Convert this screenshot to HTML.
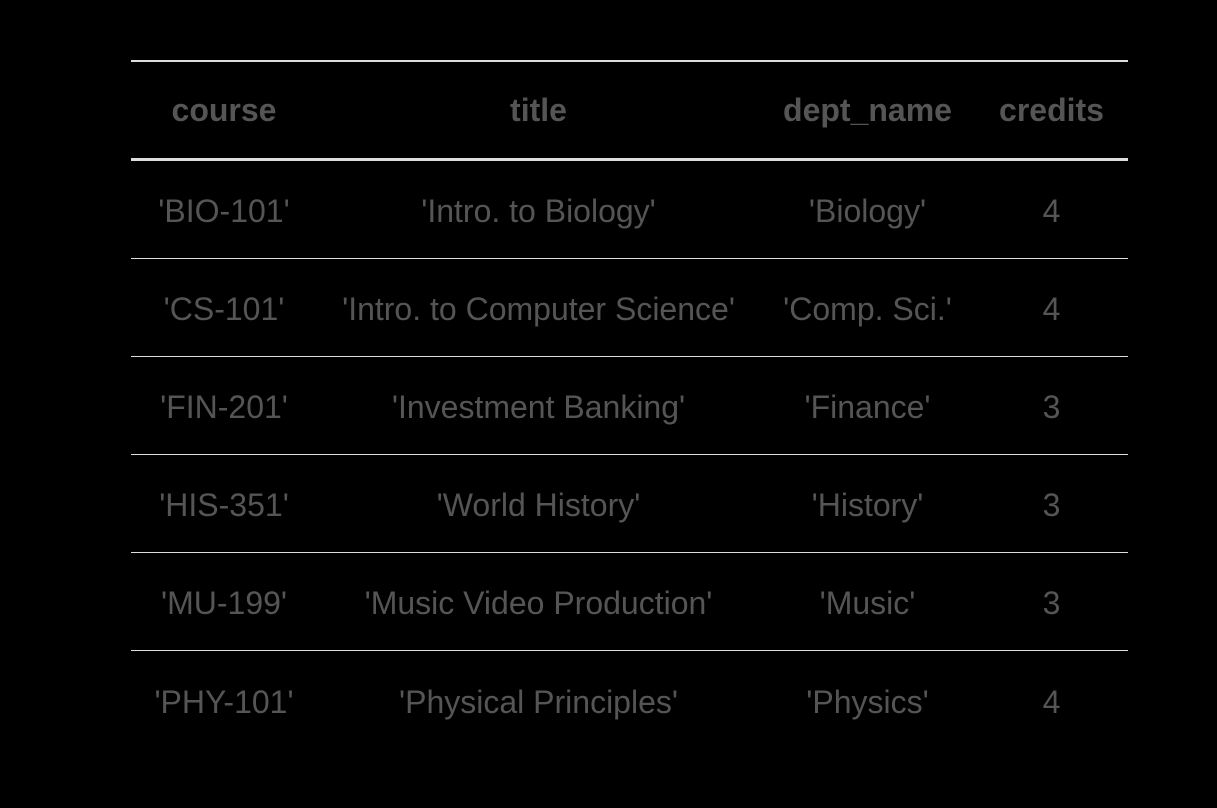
<!DOCTYPE html>
<html><head><style>
html,body{margin:0;background:#000;width:1217px;height:808px;overflow:hidden}
.t{position:absolute;left:131px;top:60px;width:997px;font-family:"Liberation Sans",Arial,sans-serif;color:#555;font-size:32px}
.r{display:flex;height:98px;align-items:center;border-bottom:1px solid #ddd;box-sizing:border-box;padding-top:4px}
.h{border-top:2px solid #ddd;border-bottom:3px solid #ddd;font-weight:bold;height:101px;padding-top:0}
.r div{text-align:center}
.c1{width:186px}.c2{width:443px}.c3{width:215px}.c4{width:153px}
.r:last-child{border-bottom:none}
</style></head><body>
<div class="t">
<div class="r h"><div class="c1">course</div><div class="c2">title</div><div class="c3">dept_name</div><div class="c4">credits</div></div>
<div class="r"><div class="c1">'BIO-101'</div><div class="c2">'Intro. to Biology'</div><div class="c3">'Biology'</div><div class="c4">4</div></div>
<div class="r"><div class="c1">'CS-101'</div><div class="c2">'Intro. to Computer Science'</div><div class="c3">'Comp. Sci.'</div><div class="c4">4</div></div>
<div class="r"><div class="c1">'FIN-201'</div><div class="c2">'Investment Banking'</div><div class="c3">'Finance'</div><div class="c4">3</div></div>
<div class="r"><div class="c1">'HIS-351'</div><div class="c2">'World History'</div><div class="c3">'History'</div><div class="c4">3</div></div>
<div class="r"><div class="c1">'MU-199'</div><div class="c2">'Music Video Production'</div><div class="c3">'Music'</div><div class="c4">3</div></div>
<div class="r"><div class="c1">'PHY-101'</div><div class="c2">'Physical Principles'</div><div class="c3">'Physics'</div><div class="c4">4</div></div>
</div>
</body></html>
